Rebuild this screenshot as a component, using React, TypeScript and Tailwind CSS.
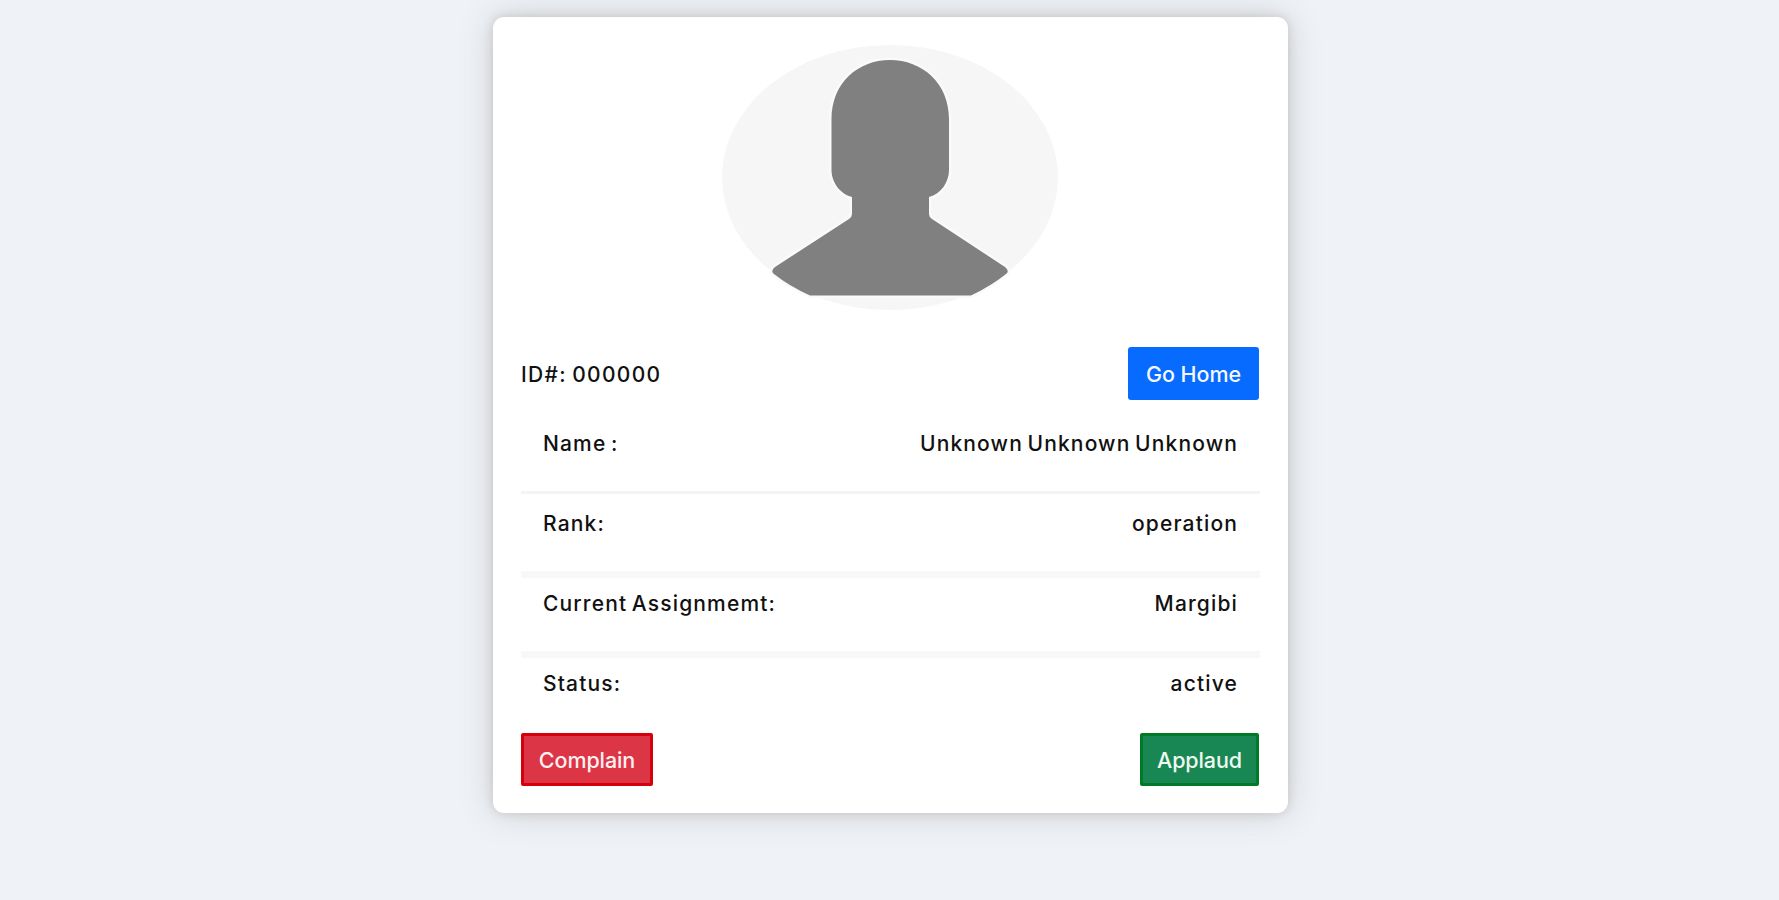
import React from "react";

function Avatar() {
  return (
    <svg className="ml-[201px] block h-[265px] w-[336px]" viewBox="722 45 336 265">
      <ellipse cx="890" cy="177.5" rx="168" ry="132.5" fill="#f6f6f6" />
      <path
        d="M831.500 119C831.500 83 858 60 890 60S949 83 949 119V170C949 182 941 194 929 197V214Q929 217 932 219L1005 267Q1010 271 1006 274Q991 286 971 295.500H810Q789 286 774 274Q770 271 775 267L849 219Q852 217 852 214V197C840 194 831.500 182 831.500 170Z"
        fill="#808080"
        stroke="#fafafa"
        strokeWidth="5"
        paintOrder="stroke"
      />
    </svg>
  );
}

const rows = [
  { label: "Name :", value: "Unknown Unknown Unknown", divider: "h-[3px] bg-[#f4f4f4]" },
  { label: "Rank:", value: "operation", divider: "h-[7px] bg-[#f8f8f8]" },
  { label: "Current Assignmemt:", value: "Margibi", divider: "h-[7px] bg-[#f8f8f8]" },
  { label: "Status:", value: "active", divider: "" },
];

export default function App() {
  return (
    <div className="h-[900px] overflow-hidden bg-[#eff3f7] pt-[17px] font-['Inter',sans-serif] text-[21px] text-[#111]">
      <main className="ml-[493px] flex h-[796px] w-[795px] flex-col rounded-[11px] bg-white px-7 pt-7 shadow-[0_0_10px_rgba(80,65,65,0.16),0_0_34px_rgba(80,65,65,0.22)]">
        <Avatar />
        <div className="mt-[37px] flex h-[53px] items-center justify-between pr-px">
          <h1 className="pt-[2px] text-[21px] font-medium tracking-[1.3px] [word-spacing:-1.5px]">ID#: 000000</h1>
          <button className="h-[53px] w-[131px] rounded-[3px] bg-[#086bff] pt-px text-[21.5px] font-medium tracking-[-0.1px] text-[#f4f8ff]">Go Home</button>
        </div>
        <div className="mt-[10px]">
          {rows.map((row) => (
            <section key={row.label} className="h-20">
              <div className="flex h-[81px] justify-between px-[22px] pt-[18px] font-medium leading-8 tracking-[1.15px] [word-spacing:-2.2px]">
                <span>{row.label}</span>
                <span>{row.value}</span>
              </div>
              <div className={row.divider} />
            </section>
          ))}
        </div>
        <div className="mt-[3px] flex h-[53px] justify-between pr-px">
          <button className="w-[132px] rounded-[2px] border-[3px] border-[#d5000c] bg-[#dc3545] pt-px text-[21.5px] font-medium tracking-[-0.1px] text-[#fdf0f1]">Complain</button>
          <button className="w-[119px] rounded-[2px] border-[3px] border-[#007a24] bg-[#198754] pt-px text-[21.5px] font-medium tracking-[-0.1px] text-[#eef8f1]">Applaud</button>
        </div>
      </main>
    </div>
  );
}
